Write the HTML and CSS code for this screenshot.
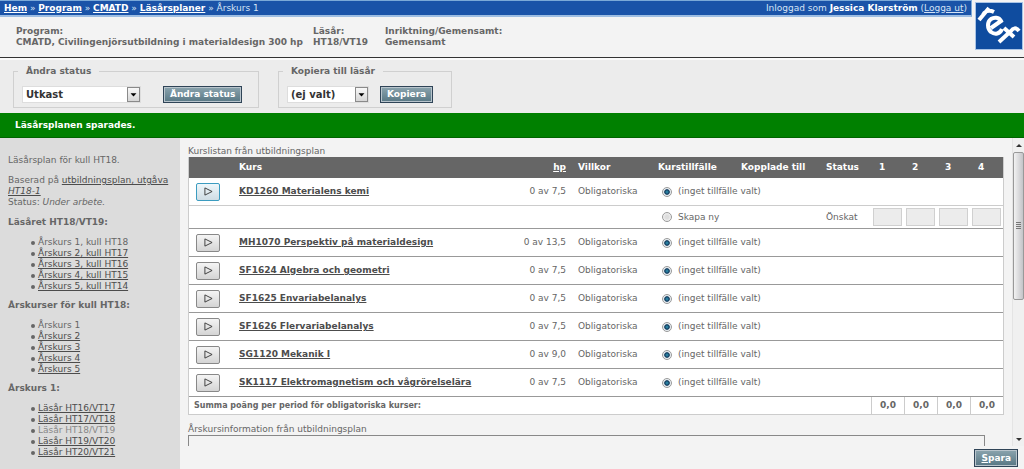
FILE: index.html
```
<!DOCTYPE html>
<html lang="sv">
<head>
<meta charset="utf-8">
<title>Läsårsplaner – Årskurs 1</title>
<link rel="stylesheet" href="styles.css">
</head>
<body>
<header class="top">
  <div class="top-main">
    <div class="bar">
      <nav class="crumbs"><a href="#">Hem</a> » <a href="#">Program</a> » <a href="#">CMATD</a> » <a href="#">Läsårsplaner</a> » Årskurs 1</nav>
      <div class="user">Inloggad som <b>Jessica Klarström</b> (<a href="#">Logga ut</a>)</div>
    </div>
    <dl class="info">
      <div><dt>Program:</dt><dd>CMATD, Civilingenjörsutbildning i materialdesign 300 hp</dd></div>
      <div><dt>Läsår:</dt><dd>HT18/VT19</dd></div>
      <div><dt>Inriktning/Gemensamt:</dt><dd>Gemensamt</dd></div>
    </dl>
  </div>
  <svg class="logo" viewBox="0 0 46 46" role="img" aria-label="ref">
    <rect width="46" height="46" fill="#0f4c9f"/>
    <g fill="none" stroke="#fff" stroke-width="4">
      <path d="M3 17 13 5M7 12C8 9 12 6 18 9"/>
      <path d="M15 25 25 18C23 14 18 14 15 16 11 19 11 25 15 29 19 32 24 31 26 26"/>
      <path d="M23 39 35 28C37 25 40 24 43 28M28 25 38 34"/>
    </g>
  </svg>
</header>

<section class="tools">
  <fieldset class="tool tool-status">
    <legend>Ändra status</legend>
    <span class="pick pick-wide"><select aria-label="Status"><option>Utkast</option></select><svg viewBox="0 0 13 15" aria-hidden="true"><path d="M3 6h7L6.500 10z"/></svg></span>
    <button class="btn" type="button">Ändra status</button>
  </fieldset>
  <fieldset class="tool tool-copy">
    <legend>Kopiera till läsår</legend>
    <span class="pick"><select aria-label="Läsår"><option>(ej valt)</option></select><svg viewBox="0 0 13 15" aria-hidden="true"><path d="M3 6h7L6.500 10z"/></svg></span>
    <button class="btn" type="button">Kopiera</button>
  </fieldset>
</section>

<div class="notice" role="status">Läsårsplanen sparades.</div>

<div class="body">
  <aside class="side">
    <p>Läsårsplan för kull HT18.</p>
    <p>Baserad på <a href="#">utbildningsplan, utgåva <i>HT18-1</i></a><br>Status: <i>Under arbete.</i></p>
    <h2>Läsåret HT18/VT19:</h2>
    <ul>
      <li>Årskurs 1, kull HT18</li>
      <li><a href="#">Årskurs 2, kull HT17</a></li>
      <li><a href="#">Årskurs 3, kull HT16</a></li>
      <li><a href="#">Årskurs 4, kull HT15</a></li>
      <li><a href="#">Årskurs 5, kull HT14</a></li>
    </ul>
    <h2>Årskurser för kull HT18:</h2>
    <ul>
      <li>Årskurs 1</li>
      <li><a href="#">Årskurs 2</a></li>
      <li><a href="#">Årskurs 3</a></li>
      <li><a href="#">Årskurs 4</a></li>
      <li><a href="#">Årskurs 5</a></li>
    </ul>
    <h2>Årskurs 1:</h2>
    <ul>
      <li><a href="#">Läsår HT16/VT17</a></li>
      <li><a href="#">Läsår HT17/VT18</a></li>
      <li><span class="dim">Läsår HT18/VT19</span></li>
      <li><a href="#">Läsår HT19/VT20</a></li>
      <li><a href="#">Läsår HT20/VT21</a></li>
    </ul>
  </aside>

  <main class="main">
    <div class="scroller">
      <div class="content">
        <table class="courses">
          <caption>Kurslistan från utbildningsplan</caption>
          <colgroup><col class="c-btn"><col><col class="c-hp"><col class="c-cond"><col class="c-occ"><col class="c-link"><col class="c-status"><col class="c-per"><col class="c-per"><col class="c-per"><col class="c-per"></colgroup>
          <thead>
            <tr><th></th><th>Kurs</th><th class="num"><abbr title="högskolepoäng">hp</abbr></th><th>Villkor</th><th>Kurstillfälle</th><th>Kopplade till</th><th>Status</th><th>1</th><th>2</th><th>3</th><th>4</th></tr>
          </thead>
          <tbody>
            <tr class="open"><td><button class="toggle active" type="button" aria-label="Visa KD1260"><svg viewBox="0 0 10 10"><path d="M1 1 9 5 1 9z"/></svg></button></td><td><a href="#">KD1260 Materialens kemi</a></td><td class="num">0 av 7,5</td><td>Obligatoriska</td><td colspan="2"><label><input type="radio" name="k1" checked>(inget tillfälle valt)</label></td><td></td><td></td><td></td><td></td><td></td></tr>
            <tr class="sub"><td></td><td></td><td></td><td></td><td colspan="2"><label><input type="radio" name="k1">Skapa ny</label></td><td>Önskat</td><td class="per"><input type="text" aria-label="Period 1" disabled></td><td class="per"><input type="text" aria-label="Period 2" disabled></td><td class="per"><input type="text" aria-label="Period 3" disabled></td><td class="per"><input type="text" aria-label="Period 4" disabled></td></tr>
            <tr><td><button class="toggle" type="button" aria-label="Visa MH1070"><svg viewBox="0 0 10 10"><path d="M1 1 9 5 1 9z"/></svg></button></td><td><a href="#">MH1070 Perspektiv på materialdesign</a></td><td class="num">0 av 13,5</td><td>Obligatoriska</td><td colspan="2"><label><input type="radio" name="k2" checked>(inget tillfälle valt)</label></td><td colspan="5"></td></tr>
            <tr><td><button class="toggle" type="button" aria-label="Visa SF1624"><svg viewBox="0 0 10 10"><path d="M1 1 9 5 1 9z"/></svg></button></td><td><a href="#">SF1624 Algebra och geometri</a></td><td class="num">0 av 7,5</td><td>Obligatoriska</td><td colspan="2"><label><input type="radio" name="k3" checked>(inget tillfälle valt)</label></td><td colspan="5"></td></tr>
            <tr><td><button class="toggle" type="button" aria-label="Visa SF1625"><svg viewBox="0 0 10 10"><path d="M1 1 9 5 1 9z"/></svg></button></td><td><a href="#">SF1625 Envariabelanalys</a></td><td class="num">0 av 7,5</td><td>Obligatoriska</td><td colspan="2"><label><input type="radio" name="k4" checked>(inget tillfälle valt)</label></td><td colspan="5"></td></tr>
            <tr><td><button class="toggle" type="button" aria-label="Visa SF1626"><svg viewBox="0 0 10 10"><path d="M1 1 9 5 1 9z"/></svg></button></td><td><a href="#">SF1626 Flervariabelanalys</a></td><td class="num">0 av 7,5</td><td>Obligatoriska</td><td colspan="2"><label><input type="radio" name="k5" checked>(inget tillfälle valt)</label></td><td colspan="5"></td></tr>
            <tr><td><button class="toggle" type="button" aria-label="Visa SG1120"><svg viewBox="0 0 10 10"><path d="M1 1 9 5 1 9z"/></svg></button></td><td><a href="#">SG1120 Mekanik I</a></td><td class="num">0 av 9,0</td><td>Obligatoriska</td><td colspan="2"><label><input type="radio" name="k6" checked>(inget tillfälle valt)</label></td><td colspan="5"></td></tr>
            <tr><td><button class="toggle" type="button" aria-label="Visa SK1117"><svg viewBox="0 0 10 10"><path d="M1 1 9 5 1 9z"/></svg></button></td><td><a href="#">SK1117 Elektromagnetism och vågrörelselära</a></td><td class="num">0 av 7,5</td><td>Obligatoriska</td><td colspan="2"><label><input type="radio" name="k7" checked>(inget tillfälle valt)</label></td><td colspan="5"></td></tr>
          </tbody>
          <tfoot>
            <tr><td colspan="7" class="sum">Summa poäng per period för obligatoriska kurser:</td><td>0,0</td><td>0,0</td><td>0,0</td><td>0,0</td></tr>
          </tfoot>
        </table>
        <label class="note-label" for="note">Årskursinformation från utbildningsplan</label>
        <textarea class="note" id="note"></textarea>
      </div>
      <div class="scrollbar" aria-hidden="true">
        <svg class="arrow" viewBox="0 0 11 14"><path d="M3 9h6L6 6z"/></svg>
        <div class="thumb"><svg viewBox="0 0 5 7"><path d="M0 .5h5M0 2.500h5M0 4.500h5M0 6.500h5" stroke="#777"/></svg></div>
        <svg class="arrow" viewBox="0 0 11 14"><path d="M3 6h6L6 9z"/></svg>
      </div>
    </div>
    <footer class="foot"><button class="btn" type="button"><u>S</u>para</button></footer>
  </main>
</div>
</body>
</html>
```

FILE: styles.css
```
* { box-sizing: border-box; }
body {
  margin: 0;
  height: 100vh;
  display: flex;
  flex-direction: column;
  overflow: hidden;
  background: #f3f3f3;
  color: #666;
  font: 9px/11px Verdana, "DejaVu Sans", sans-serif;
}
a { color: #4c4c4c; text-decoration: underline; }
button, input, select, textarea { font: inherit; color: inherit; margin: 0; }

.top { display: flex; border-bottom: 1px solid #333; }
.top-main { flex: 1; }
.bar {
  display: flex;
  justify-content: space-between;
  align-items: center;
  height: 17px;
  padding: 0 4px;
  background: #1a53a8;
  border-top: 1px solid #7ba9d8;
  border-right: 1px solid #7ba9d8;
  border-bottom: 2px solid #9dbde2;
  color: #d5e3f5;
}
.bar a { color: #fff; }
.crumbs a { font-weight: bold; }
.user b { color: #fff; }
.user a { color: #d5e3f5; }
.info { display: flex; gap: 10px; margin: 0; padding: 9px 16px; font-weight: bold; }
.info div { min-width: 62px; }
.info dd { margin: 0; }
.logo { width: 48px; height: 48px; margin: 2px 1px 7px 3px; border: 1px solid #a9c4e6; }

.tools {
  display: flex;
  gap: 19px;
  padding: 6px 13px 5px;
  background: #ececec;
  border-top: 2px solid #fafafa;
}
.tool {
  display: flex;
  margin: 0;
  padding: 9px 8px 4px;
  border: 1px solid #d0d0d0;
  font-weight: bold;
}
.tool-status { width: 246px; }
.tool-copy { width: 174px; }
.tool legend { padding: 0 8px; margin-left: -4px; }
.pick { position: relative; width: 82px; height: 17px; margin-right: 11px; }
.pick-wide { width: 119px; margin-right: 22px; }
.pick select {
  appearance: none;
  width: 100%;
  height: 100%;
  padding: 0 16px 0 3px;
  border: 1px solid #ddd;
  background: #fff;
  color: #333;
  font-size: 10px;
}
.pick svg {
  position: absolute;
  top: 1px;
  right: 1px;
  width: 13px;
  height: 15px;
  border: 1px solid #8a8a8a;
  background: linear-gradient(#f8f8f8, #d6d6d6);
  pointer-events: none;
}
.btn {
  height: 17px;
  padding: 0 6px;
  border: 1px solid #2f4457;
  outline: 1px solid #b8c4cc;
  outline-offset: -2px;
  background: linear-gradient(#8ba4ae, #587784);
  color: #fff;
  font-weight: bold;
}

.notice {
  padding: 7px 15px 6px;
  background: #008000;
  border-bottom: 1px solid #006400;
  color: #fff;
  font-weight: bold;
}

.body { flex: 1; display: flex; min-height: 0; }
.side { width: 180px; padding: 17px 8px 0; background: #dcdcdc; overflow: hidden; }
.side p, .side h2 { margin: 0 0 9px; font-size: 9px; line-height: 11px; }
.side ul { margin: 0 0 8px; padding: 0 0 0 23px; list-style: none; }
.side li { display: flex; align-items: center; gap: 3px; }
.side li::before { content: ""; width: 4px; height: 4px; border-radius: 50%; background: #666; }
.dim { color: #888; }

.main { flex: 1; display: flex; flex-direction: column; min-width: 0; }
.scroller { flex: 1; display: flex; min-height: 0; }
.content { flex: 1; padding: 8px 8px 0; overflow: hidden; }

.courses {
  width: 100%;
  table-layout: fixed;
  border-collapse: separate;
  border-spacing: 0;
  background: #fff;
  border: solid #ccc;
  border-width: 0 1px 1px;
}
.courses caption { text-align: left; white-space: nowrap; }
.c-btn { width: 44px; }
.c-hp { width: 60px; }
.c-cond { width: 80px; }
.c-occ { width: 83px; }
.c-link { width: 85px; }
.c-status { width: 51px; }
.c-per { width: 33px; }
.courses th, .courses td { padding: 0 6px; text-align: left; vertical-align: middle; white-space: nowrap; }
.courses th { height: 21px; background: #666; color: #fff; }
.courses th:nth-child(n+8) { padding-left: 8px; }
.courses tbody td { height: 28px; border-bottom: 1px solid #999; }
.courses tbody .open td { border-color: #ccc; }
.courses tbody .sub td { height: 23px; }
.courses tbody a { font-weight: bold; }
.courses .num { text-align: right; }
.courses abbr { text-decoration: underline; }
.courses label { display: flex; align-items: center; gap: 6px; padding-left: 4px; }
.courses .per { padding: 0 2px; }
.per input { display: block; width: 100%; height: 18px; border: 1px solid #d0d0d0; background: #ececec; }
.courses tfoot td { height: 17px; padding: 0; border-left: 1px solid #ccc; text-align: center; font-weight: bold; }
.courses tfoot .sum { padding: 0 5px; border: 0; text-align: left; font-size: 8px; }
.courses input[type="radio"] {
  appearance: none;
  width: 10px;
  height: 10px;
  border: 1px solid #9a9a9a;
  border-radius: 50%;
  background: radial-gradient(#ddd 30%, #fff);
}
.courses input[type="radio"]:checked { background: radial-gradient(#2b88a8 8%, #12395c 42%, #e8eef2 56%); }
.toggle {
  display: flex;
  align-items: center;
  justify-content: center;
  width: 24px;
  height: 18px;
  margin-left: 1px;
  padding: 0;
  border: 1px solid #888;
  border-radius: 2px;
  background: linear-gradient(#f4f4f4, #d4d4d4);
}
.toggle svg { width: 9px; height: 9px; fill: none; stroke: #333; }
.toggle.active { border-color: #3c9cc0; background: linear-gradient(#eef7fb, #cfdde4); }

.note-label { display: block; margin-top: 9px; }
.note { display: block; width: calc(100% - 19px); height: 60px; border: 1px solid #888; background: #f3f3f3; resize: none; }

.scrollbar {
  display: flex;
  flex-direction: column;
  width: 12px;
  border-left: 1px solid #e4e4e4;
  background: #f0f0f0;
}
.arrow { width: 11px; height: 14px; fill: #333; }
.arrow:last-child { margin-top: auto; }
.thumb {
  display: flex;
  align-items: center;
  justify-content: center;
  height: 48%;
  border: 1px solid #999;
  border-radius: 2px;
  background: linear-gradient(90deg, #f2f2f2, #c4c4c8);
}
.thumb svg { width: 5px; height: 7px; }
.foot { display: flex; justify-content: flex-end; padding: 3px 6px 2px; }
.foot .btn { height: 18px; }
```
